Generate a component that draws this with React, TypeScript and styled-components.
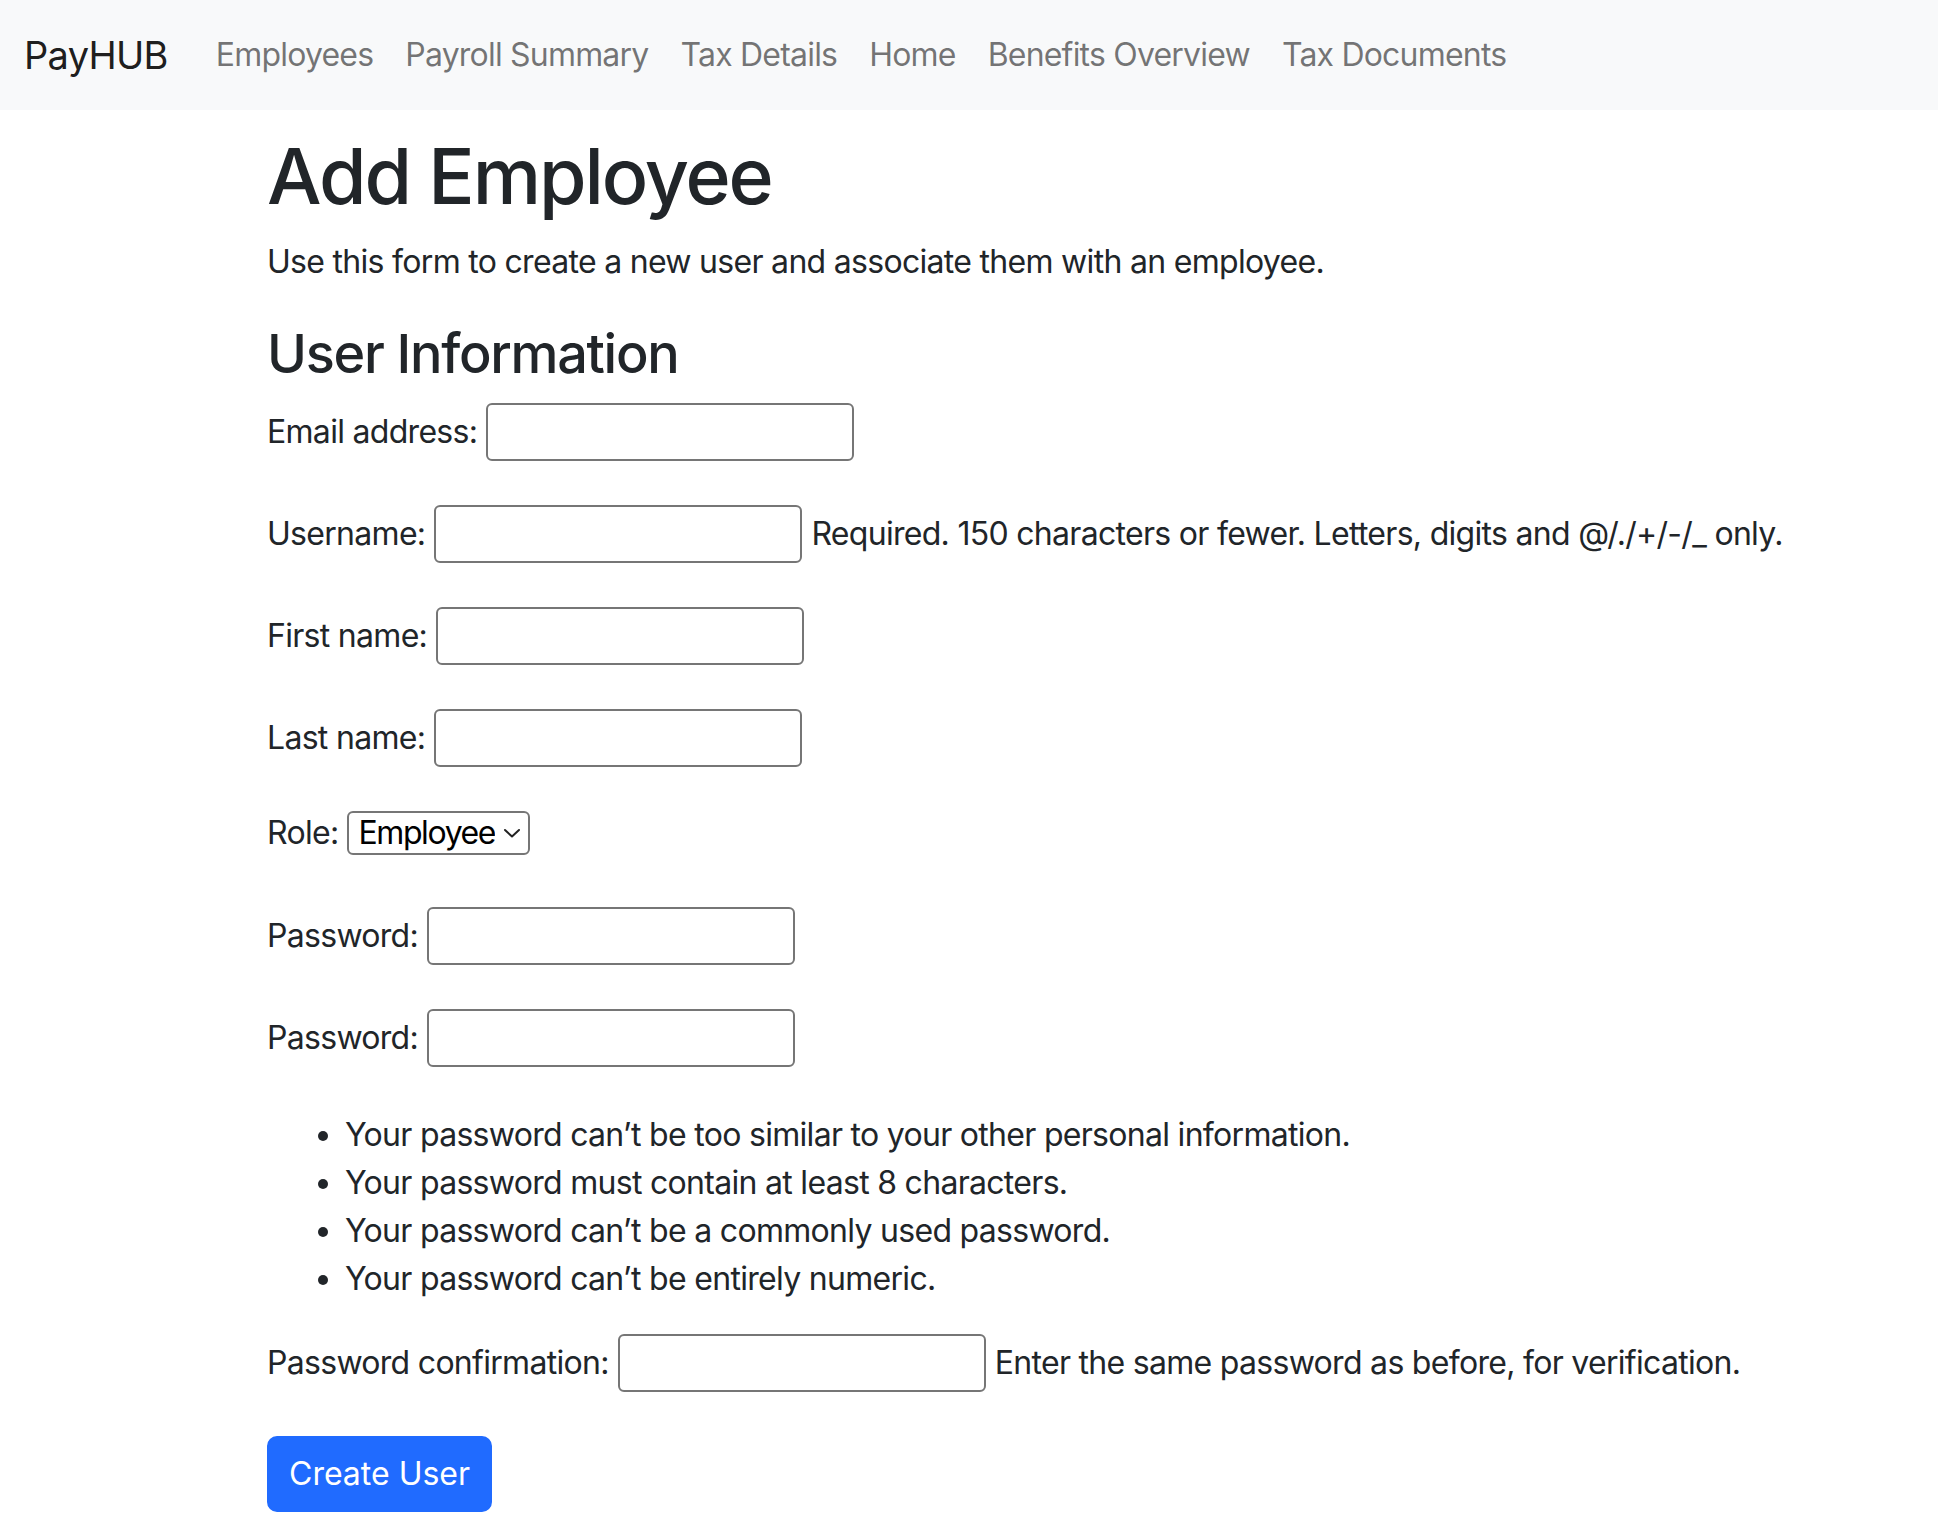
import React from "react";
import styled, { createGlobalStyle } from "styled-components";

const GlobalStyle = createGlobalStyle`
  html { overflow: hidden; }
  body {
    margin: 0;
    font-family: Inter, "Noto Sans", "Liberation Sans", sans-serif;
    font-size: 32px;
    line-height: 1.5;
    letter-spacing: -0.7px;
    color: #212529;
    background: #fff;
  }
  * { box-sizing: border-box; }
`;

const Navbar = styled.nav`
  display: flex;
  align-items: center;
  height: 110px;
  padding: 0 24px;
  background: #f8f9fa;
`;

const Brand = styled.a`
  font-size: 38px;
  line-height: 60px;
  letter-spacing: -0.7px;
  color: rgba(0, 0, 0, 0.9);
  text-decoration: none;
  margin-right: 32px;
`;

const NavList = styled.ul`
  display: flex;
  list-style: none;
  margin: 0;
  padding: 0;
`;

const NavLink = styled.a`
  display: block;
  padding: 16px;
  font-size: 32px;
  line-height: 48px;
  letter-spacing: -0.8px;
  color: rgba(0, 0, 0, 0.55);
  text-decoration: none;
`;

const Container = styled.main`
  max-width: 1452px;
  margin: 0 auto;
  padding: 0 24px;
`;

const Title = styled.h1`
  font-size: 77px;
  font-weight: 500;
  line-height: 1.2;
  letter-spacing: -2.1px;
  margin: 20px 0 16px;
`;

const Lead = styled.p`
  margin: 0 0 36px;
`;

const SectionTitle = styled.h2`
  font-size: 54px;
  font-weight: 500;
  line-height: 1.2;
  letter-spacing: -1.3px;
  margin: 0 0 10px;
`;

const FieldRow = styled.div<{ $compact?: boolean }>`
  display: flex;
  align-items: center;
  gap: 9px;
  min-height: ${(p) => (p.$compact ? 56 : 70)}px;
  margin-bottom: ${(p) => (p.$compact ? 40 : 32)}px;
`;

const Label = styled.label`
  white-space: nowrap;
`;

const TextInput = styled.input`
  width: 368px;
  height: 58px;
  border: 2px solid #767676;
  border-radius: 6px;
  font: inherit;
  padding: 0 8px;
  background: #fff;
`;

const HelpText = styled.span`
  white-space: nowrap;
`;

const SelectBox = styled.div`
  display: flex;
  align-items: center;
  gap: 7px;
  height: 44px;
  padding: 0 6px 0 9px;
  border: 2px solid #767676;
  border-radius: 6px;
  background: #fff;
`;

const Select = styled.select`
  appearance: none;
  border: none;
  background: transparent;
  font: inherit;
  letter-spacing: -1.4px;
  color: #000;
  padding: 0;
  line-height: 40px;
  outline: none;
`;

const Rules = styled.ul`
  margin: 38px 0 25px;
  padding-left: 78px;
`;

const SubmitButton = styled.button`
  display: inline-block;
  height: 76px;
  padding: 0 20px;
  border: 2px solid #206bff;
  border-radius: 10px;
  background: #206bff;
  color: #fff;
  font: inherit;
  font-size: 32px;
  line-height: 48px;
  margin-top: 6px;
`;

const navItems = [
  "Employees",
  "Payroll Summary",
  "Tax Details",
  "Home",
  "Benefits Overview",
  "Tax Documents",
];

const Chevron = () => (
  <svg width="20" height="12" viewBox="0 0 20 12" fill="none">
    <path d="M3 3 L10 9.5 L17 3" stroke="#222" strokeWidth="2" strokeLinecap="round" strokeLinejoin="round" />
  </svg>
);

type Field = { label: string; id: string; type?: string; help?: string };

const topFields: Field[] = [
  { label: "Email address:", id: "email", type: "email" },
  {
    label: "Username:",
    id: "username",
    help: "Required. 150 characters or fewer. Letters, digits and @/./+/-/_ only.",
  },
  { label: "First name:", id: "first" },
  { label: "Last name:", id: "last" },
];

export default function App() {
  return (
    <>
      <GlobalStyle />
      <Navbar>
        <Brand href="#">PayHUB</Brand>
        <NavList>
          {navItems.map((n) => (
            <li key={n}>
              <NavLink href="#">{n}</NavLink>
            </li>
          ))}
        </NavList>
      </Navbar>
      <Container>
        <Title>Add Employee</Title>
        <Lead>Use this form to create a new user and associate them with an employee.</Lead>
        <SectionTitle>User Information</SectionTitle>
        <form onSubmit={(e) => e.preventDefault()}>
          {topFields.map((f) => (
            <FieldRow key={f.id}>
              <Label htmlFor={f.id}>{f.label}</Label>
              <TextInput id={f.id} type={f.type ?? "text"} />
              {f.help && <HelpText>{f.help}</HelpText>}
            </FieldRow>
          ))}
          <FieldRow $compact>
            <Label htmlFor="role">Role:</Label>
            <SelectBox>
              <Select id="role" defaultValue="employee">
                <option value="employee">Employee</option>
                <option value="manager">Manager</option>
                <option value="admin">Admin</option>
              </Select>
              <Chevron />
            </SelectBox>
          </FieldRow>
          <FieldRow>
            <Label htmlFor="pw1">Password:</Label>
            <TextInput id="pw1" type="password" />
          </FieldRow>
          <FieldRow>
            <Label htmlFor="pw1b">Password:</Label>
            <TextInput id="pw1b" type="password" />
          </FieldRow>
          <Rules>
            <li>Your password can’t be too similar to your other personal information.</li>
            <li>Your password must contain at least 8 characters.</li>
            <li>Your password can’t be a commonly used password.</li>
            <li>Your password can’t be entirely numeric.</li>
          </Rules>
          <FieldRow>
            <Label htmlFor="pw2">Password confirmation:</Label>
            <TextInput id="pw2" type="password" />
            <HelpText>Enter the same password as before, for verification.</HelpText>
          </FieldRow>
          <SubmitButton type="submit">Create User</SubmitButton>
        </form>
      </Container>
    </>
  );
}
